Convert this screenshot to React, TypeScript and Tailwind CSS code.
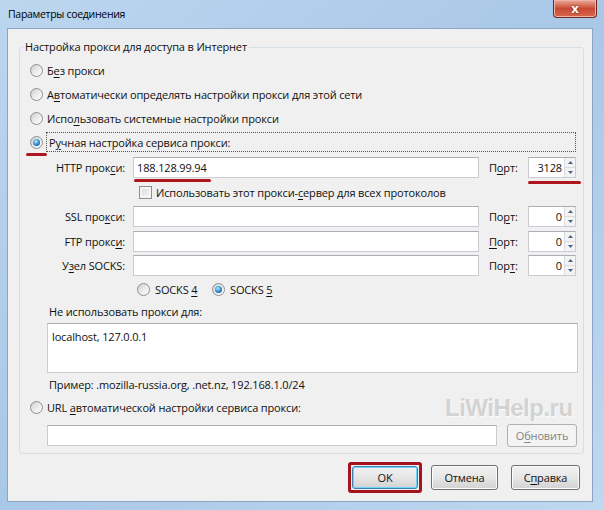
import React from "react";

function Radio({ checked = false }: { checked?: boolean }) {
  return (
    <span className="flex h-[13px] w-[13px] shrink-0 items-center justify-center rounded-full border border-[#8c8e92] bg-linear-to-br from-[#cdcecf] via-[#ebebeb] to-[#ffffff]">
      {checked ? (
        <span className="h-[7px] w-[7px] rounded-full bg-[radial-gradient(circle_at_40%_35%,#b4ebff_0%,#3f97d4_45%,#0c3f78_100%)]" />
      ) : null}
    </span>
  );
}

function U({ children }: { children: React.ReactNode }) {
  return <span className="underline underline-offset-[2px]">{children}</span>;
}

function Arrow({ up }: { up?: boolean }) {
  return (
    <svg width="5" height="3" viewBox="0 0 5 3">
      {up ? <path d="M0 3 L2.5 0 L5 3 Z" fill="#4d6185" /> : <path d="M0 0 L2.5 3 L5 0 Z" fill="#4d6185" />}
    </svg>
  );
}

function PortBox({ value, mark }: { value: string; mark?: boolean }) {
  return (
    <div className="relative flex h-[21px] w-[48px] border border-[#c9ccd2] border-t-[#abadb3] bg-white">
      <div className="flex flex-1 items-center justify-end pr-[2px]">{value}</div>
      <div className="flex w-[11px] flex-col border-l border-[#dadce1]">
        <div className="flex flex-1 items-center justify-center border-b border-[#dadce1] bg-[#f3f3f3]">
          <Arrow up />
        </div>
        <div className="flex flex-1 items-center justify-center bg-[#f3f3f3]">
          <Arrow />
        </div>
      </div>
      {mark ? <span className="absolute left-[-1px] top-[23px] h-[3px] w-[53px] rounded-full bg-[#b0161f]" /> : null}
    </div>
  );
}

function ProxyRow({
  label,
  port,
  value,
  portValue,
  markValue,
  markPort,
  className,
}: {
  label: React.ReactNode;
  port: React.ReactNode;
  value?: string;
  portValue: string;
  markValue?: boolean;
  markPort?: boolean;
  className: string;
}) {
  return (
    <div className={"flex items-center " + className}>
      <div className="w-[105px] text-right">{label}</div>
      <div className="relative ml-[8px] flex h-[21px] w-[346px] items-center border border-[#c9ccd2] border-t-[#abadb3] bg-white pl-[3px]">
        {value}
        {markValue ? <span className="absolute left-[0px] top-[21px] h-[3px] w-[77px] rounded-full bg-[#b0161f]" /> : null}
      </div>
      <div className="ml-[10px] w-[29px]">{port}</div>
      <div className="ml-[10px]">
        <PortBox value={portValue} mark={markPort} />
      </div>
    </div>
  );
}

function WinButton({ children, className, disabled, def }: { children: React.ReactNode; className: string; disabled?: boolean; def?: boolean }) {
  if (disabled) {
    return (
      <div className={"flex items-center justify-center rounded-[3px] border border-[#adb2b5] bg-[#f4f4f4] text-[#838383] " + className}>
        {children}
      </div>
    );
  }
  return (
    <div
      className={
        "flex items-center justify-center rounded-[3px] border bg-linear-to-b from-[#f2f2f2] via-[#e6e6e6] to-[#d2d2d2] " +
        (def ? "border-[#3c7fb1] shadow-[inset_0_0_0_1px_#6fd6f9] " : "border-[#707070] shadow-[inset_0_0_0_1px_#fcfcfc] ") +
        className
      }
    >
      {children}
    </div>
  );
}

export default function App() {
  return (
    <div className="relative flex h-[510px] w-[604px] flex-col overflow-hidden bg-linear-to-br from-[#bcd6ef] via-[#a9c7e7] to-[#bfd8f0] font-['Open_Sans',sans-serif] text-[11px] leading-none tracking-[-0.15px] text-[#111]">
      <div className="flex h-[28px] shrink-0 justify-between pl-[8px] pr-[7px]">
        <span className="self-center text-[10.5px] tracking-[-0.3px] text-[#000]">Параметры соединения</span>
        <div className="flex h-[18px] w-[44px] items-center justify-center rounded-b-[4px] border border-t-0 border-[#6e2a22] bg-linear-to-b from-[#e9a99b] via-[#c94a34] to-[#d8654f] shadow-[inset_0_0_0_1px_#f0b4a6]">
          <span className="text-[13px] font-bold text-white [text-shadow:0_0_2px_#5a1a12]">x</span>
        </div>
      </div>

      <div className="relative mb-[8px] ml-[7px] mr-[11px] flex flex-1 flex-col border border-[#8aa5c2] bg-[#f0f0f0]">
        <div className="relative ml-[11px] mt-[18px] flex w-[565px] flex-col rounded-[3px] border border-[#d5dfe5] pb-[6px] pt-[10px]">
          <span className="absolute left-[3px] top-[-7px] bg-[#f0f0f0] px-[2px]">Настройка прокси для доступа в Интернет</span>

          <div className="flex h-[24px] items-center gap-[4px] pl-[10px]">
            <Radio />
            <span>
              Б<U>е</U>з прокси
            </span>
          </div>
          <div className="flex h-[24px] items-center gap-[4px] pl-[10px]">
            <Radio />
            <span>
              А<U>в</U>томатически определять настройки прокси для этой сети
            </span>
          </div>
          <div className="flex h-[24px] items-center gap-[4px] pl-[10px]">
            <Radio />
            <span>
              Испо<U>л</U>ьзовать системные настройки прокси
            </span>
          </div>
          <div className="flex h-[24px] items-center pl-[10px] pr-[7px]">
            <div className="relative">
              <Radio checked />
              <span className="absolute left-[-4px] top-[17px] h-[3px] w-[21px] rounded-full bg-[#b0161f]" />
            </div>
            <div className="ml-[3px] flex h-[20px] flex-1 items-center border border-dotted border-[#555] pl-[2px]">
              Р<U>у</U>чная настройка сервиса прокси:
            </div>
          </div>

          <ProxyRow
            className="h-[26px]"
            label={
              <>
                HTTP прок<U>с</U>и:
              </>
            }
            port={
              <>
                П<U>о</U>рт:
              </>
            }
            value="188.128.99.94"
            portValue="3128"
            markValue
            markPort
          />

          <div className="flex h-[24px] items-center pl-[119px]">
            <span className="h-[13px] w-[13px] shrink-0 border border-[#8c8e92] bg-linear-to-br from-[#d6d7d8] to-[#fbfbfb] shadow-[inset_0_0_0_2px_#f4f4f4]" />
            <span className="ml-[4px]">
              Использовать этот прокси-<U>с</U>ервер для всех протоколов
            </span>
          </div>

          <ProxyRow
            className="h-[25px]"
            label={
              <>
                SSL про<U>к</U>си:
              </>
            }
            port={
              <>
                По<U>р</U>т:
              </>
            }
            portValue="0"
          />
          <ProxyRow
            className="h-[24px]"
            label={
              <>
                FTP прокс<U>и</U>:
              </>
            }
            port={
              <>
                <U>П</U>орт:
              </>
            }
            portValue="0"
          />
          <ProxyRow
            className="h-[24px]"
            label={
              <>
                У<U>з</U>ел SOCKS:
              </>
            }
            port={
              <>
                Пор<U>т</U>:
              </>
            }
            portValue="0"
          />

          <div className="flex h-[24px] items-center pl-[117px]">
            <div className="flex w-[75px] items-center gap-[5px]">
              <Radio />
              <span>
                SOCKS <U>4</U>
              </span>
            </div>
            <div className="flex items-center gap-[5px]">
              <Radio checked />
              <span>
                SOCKS <U>5</U>
              </span>
            </div>
          </div>

          <div className="flex h-[21px] items-center pl-[29px]">Не использовать прокси для:</div>
          <div className="ml-[27px] mt-[1px] h-[50px] w-[531px] border border-[#c9ccd2] border-t-[#abadb3] bg-white pl-[4px] pt-[7px]">
            localhost, 127.0.0.1
          </div>
          <div className="flex h-[22px] items-center pl-[29px]">Пример: .mozilla-russia.org, .net.nz, 192.168.1.0/24</div>
          <div className="flex h-[24px] items-center gap-[4px] pl-[10px]">
            <Radio />
            <span>
              URL <U>а</U>втоматической настройки сервиса прокси:
            </span>
          </div>
          <div className="mt-[5px] flex h-[23px] items-center">
            <div className="ml-[27px] h-[21px] w-[450px] border border-[#c9ccd2] border-t-[#abadb3] bg-white" />
            <WinButton className="ml-[10px] h-[23px] w-[70px]" disabled>
              О<U>б</U>новить
            </WinButton>
          </div>

          <span className="absolute left-[425px] top-[348px] font-['Liberation_Sans',sans-serif] text-[24px] font-bold tracking-[-0.5px] text-[#d3d3d3] [text-shadow:1px_1px_0_#fafafa]">
            LiWiHelp.ru
          </span>
        </div>

        <div className="mr-[12px] mt-[8px] flex items-center justify-end">
          <div className="flex h-[31px] w-[74px] items-center justify-center rounded-[3px] border-[3px] border-[#a3141c]">
            <WinButton className="h-[23px] w-[66px]" def>
              OK
            </WinButton>
          </div>
          <WinButton className="ml-[9px] h-[25px] w-[67px]">Отмена</WinButton>
          <WinButton className="ml-[13px] h-[25px] w-[69px]">
            С<U>п</U>равка
          </WinButton>
        </div>
      </div>
    </div>
  );
}
